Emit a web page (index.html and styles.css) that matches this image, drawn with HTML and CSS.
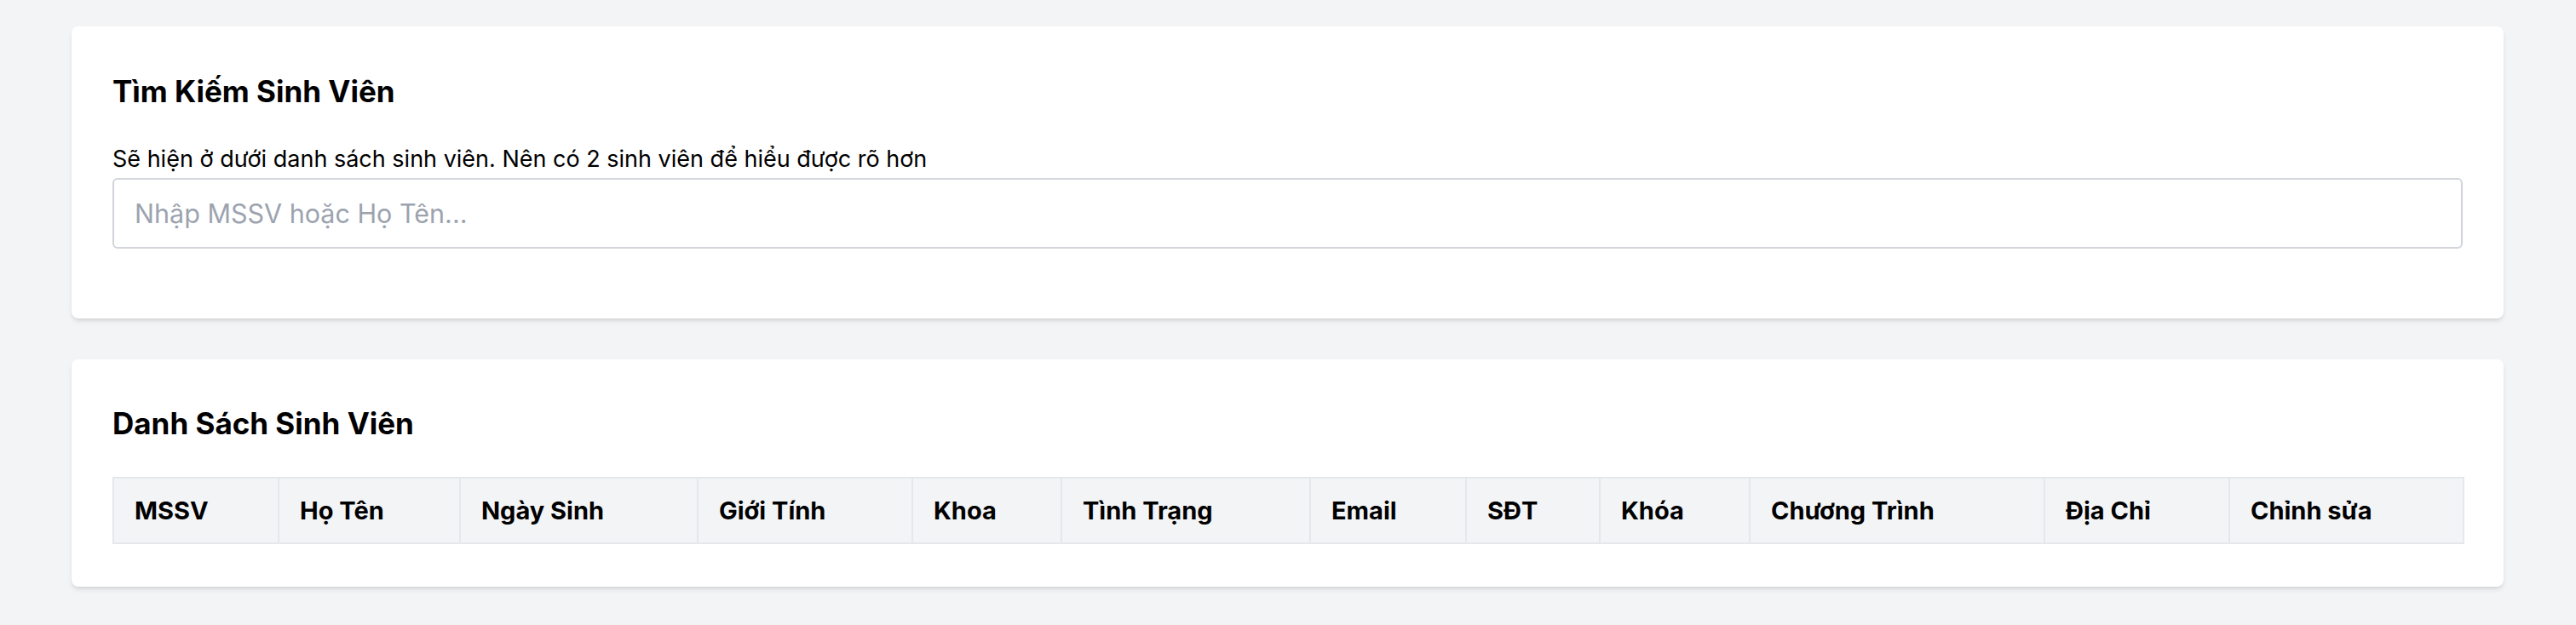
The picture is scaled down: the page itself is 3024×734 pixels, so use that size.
FILE: index.html
```html
<!DOCTYPE html>
<html lang="vi">
<head>
<meta charset="utf-8">
<title>Sinh Viên</title>
<link rel="stylesheet" href="styles.css">
</head>
<body>
<main class="page">
  <section class="card card-search">
    <h1 class="card-title">Tìm Kiếm Sinh Viên</h1>
    <label class="field-label" for="q">Sẽ hiện ở dưới danh sách sinh viên. Nên có 2 sinh viên để hiểu được rõ hơn</label>
    <input id="q" class="search-input" type="text" placeholder="Nhập MSSV hoặc Họ Tên...">
  </section>
  <section class="card card-list">
    <h2 class="card-title-lg">Danh Sách Sinh Viên</h2>
    <table class="students">
      <colgroup>
        <col class="c1"><col class="c2"><col class="c3"><col class="c4"><col class="c5"><col class="c6">
        <col class="c7"><col class="c8"><col class="c9"><col class="c10"><col class="c11"><col class="c12">
      </colgroup>
      <thead>
        <tr>
          <th>MSSV</th>
          <th>Họ Tên</th>
          <th>Ngày Sinh</th>
          <th>Giới Tính</th>
          <th>Khoa</th>
          <th>Tình Trạng</th>
          <th>Email</th>
          <th>SĐT</th>
          <th>Khóa</th>
          <th>Chương Trình</th>
          <th>Địa Chỉ</th>
          <th>Chỉnh sửa</th>
        </tr>
      </thead>
      <tbody></tbody>
    </table>
  </section>
</main>
</body>
</html>
```
FILE: styles.css
```css
* { box-sizing: border-box; }
html, body { margin: 0; padding: 0; }
body {
  background: #f3f4f6;
  font-family: Inter, "Noto Sans", "Liberation Sans", sans-serif;
  color: #000;
}
.page {
  padding: 31px 85px 40px 84px;
  display: flex;
  flex-direction: column;
  gap: 48px;
}
.card {
  background: #fff;
  border-radius: 8px;
  box-shadow: 0 4px 6px -1px rgba(0,0,0,0.10), 0 2px 4px -2px rgba(0,0,0,0.10);
  padding: 48px;
}
.card-title {
  margin: 8px 0 0 0;
  font-size: 35px;
  line-height: 40px;
  font-weight: 700;
}
.field-label {
  display: block;
  margin-top: 42px;
  font-size: 27px;
  line-height: 36px;
}
.search-input {
  display: block;
  width: 100%;
  height: 83px;
  margin: 4px 0 34px 0;
  border: 2px solid #d1d5db;
  border-radius: 6px;
  padding: 0 24px;
  font-family: inherit;
  font-size: 30.5px;
  color: #111827;
  background: #fff;
  outline: none;
}
.search-input::placeholder { color: #9ca3af; }
.card-list { padding-bottom: 50px; }
.card-title-lg {
  margin: 5px 0 0 0;
  font-size: 35px;
  line-height: 44px;
  font-weight: 700;
}
.students {
  margin-top: 41px;
  width: 100%;
  table-layout: fixed;
  border-collapse: collapse;
  border: 2px solid #e5e7eb;
}
.students th {
  background: #f3f4f6;
  border: 2px solid #e5e7eb;
  text-align: left;
  font-size: 29px;
  line-height: 36px;
  font-weight: 700;
  padding: 20px 24px 19px 24px;
  white-space: nowrap;
}
.c1 { width: 194px; }
.c2 { width: 213px; }
.c3 { width: 279px; }
.c4 { width: 252px; }
.c5 { width: 175px; }
.c6 { width: 292px; }
.c7 { width: 183px; }
.c8 { width: 157px; }
.c9 { width: 176px; }
.c10 { width: 346px; }
.c11 { width: 217px; }
.c12 { width: 275px; }
```
